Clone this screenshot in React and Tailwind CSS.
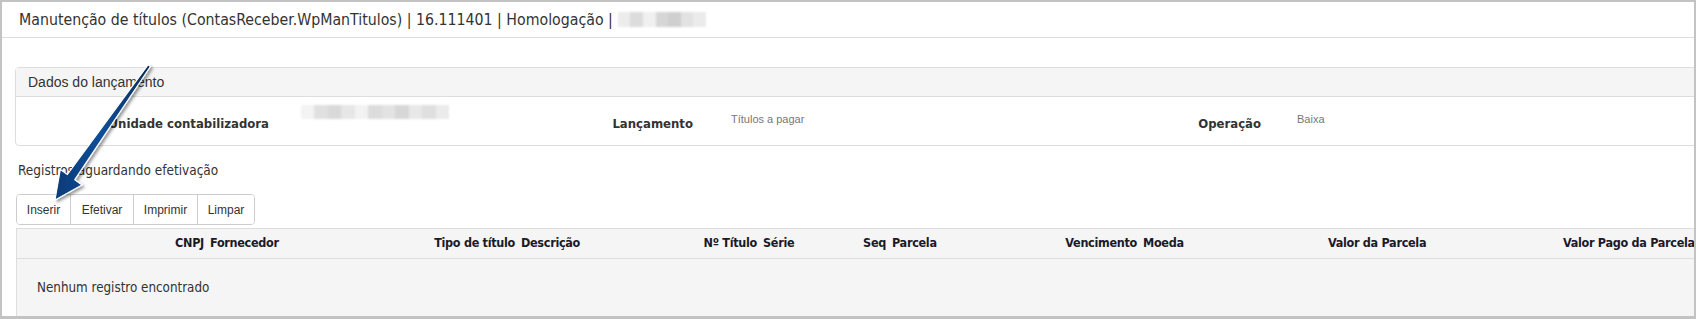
import React from 'react'

const tahoma = "font-['DejaVu_Sans_Condensed','DejaVu_Sans',sans-serif]"
const arial = "font-['Liberation_Sans',Arial,sans-serif]"

// colunas do grid: primeiro de cada par alinhado a direita, segundo a esquerda
const headers = [
  { label: 'CNPJ', w: 'w-[193px]', right: true },
  { label: 'Fornecedor', w: 'w-[190px]' },
  { label: 'Tipo de título', w: 'w-[121px]', right: true },
  { label: 'Descrição', w: 'w-[129px]' },
  { label: 'Nº Título', w: 'w-[113px]', right: true },
  { label: 'Série', w: 'w-[67px]' },
  { label: 'Seq', w: 'w-[62px]', right: true },
  { label: 'Parcela', w: 'w-[108px]' },
  { label: 'Vencimento', w: 'w-[143px]', right: true },
  { label: 'Moeda', w: 'w-[185px]' },
  { label: 'Valor da Parcela', w: 'w-[235px]' },
  { label: 'Valor Pago da Parcela', w: 'w-[200px]' },
]

const buttons = [
  { label: 'Inserir', w: 'w-[53px]' },
  { label: 'Efetivar', w: 'w-[63px]' },
  { label: 'Imprimir', w: 'w-[64px]' },
  { label: 'Limpar', w: 'w-[57px]' },
]

function Blur({ className, blocks }) {
  // valor mascarado no print
  return (
    <div className={`flex blur-[1px] ${className}`}>
      {blocks.map((c, i) => (
        <span key={i} className={`h-full flex-1 ${c}`} />
      ))}
    </div>
  )
}

function Arrow() {
  return (
    <svg className="absolute left-0 top-0 pointer-events-none" width="200" height="220" viewBox="0 0 200 220">
      <defs>
        <linearGradient id="arrowFill" x1="0" y1="0" x2="1" y2="0">
          <stop offset="0" stopColor="#0a3a78" />
          <stop offset="0.5" stopColor="#104f98" />
          <stop offset="1" stopColor="#062a58" />
        </linearGradient>
        <filter id="arrowShadow" x="-20%" y="-20%" width="140%" height="140%">
          <feDropShadow dx="2" dy="2" stdDeviation="1.5" floodColor="#000" floodOpacity="0.4" />
        </filter>
      </defs>
      <polygon
        points="146,62.8 65.4,172.5 58.3,167.4 53,198 80,182.9 72.8,177.7 148.4,64.5"
        fill="url(#arrowFill)"
        stroke="#ffffff"
        strokeWidth="1.2"
        strokeLinejoin="round"
        filter="url(#arrowShadow)"
      />
    </svg>
  )
}

export default function App() {
  return (
    <div className="relative w-[1696px] h-[319px] overflow-hidden bg-white border-2 border-b-[3px] border-[#c3c3c3]">
      {/* titulo */}
      <div className={`h-[36px] border-b border-[#dcdcdc] flex items-center pl-[17px] text-[15.75px] text-[#333] ${tahoma}`}>
        <span>Manutenção de títulos (ContasReceber.WpManTitulos) | 16.111401 | Homologação |</span>
        <Blur
          className="ml-[5px] h-[15px] w-[88px]"
          blocks={['bg-[#ececec]', 'bg-[#dcdcdc]', 'bg-[#f0f0f0]', 'bg-[#d6d6d6]', 'bg-[#cfcfcf]', 'bg-[#e2e2e2]', 'bg-[#ebebeb]']}
        />
      </div>

      {/* dados do lancamento */}
      <div className="mt-[29px] ml-[13px] w-[1720px] border border-[#dddddd] rounded-[4px]">
        <div className={`h-[29px] border-b border-[#dddddd] bg-[#f5f5f5] flex items-center pl-[12px] text-[14px] text-[#333] ${arial}`}>
          Dados do lançamento
        </div>
        <div className="h-[48px] flex items-start">
          <div className={`w-[253px] pt-[19px] text-right text-[13px] font-bold leading-[16px] text-[#333] ${tahoma}`}>
            Unidade contabilizadora
          </div>
          <Blur
            className="ml-[32px] mt-[8px] h-[14px] w-[148px]"
            blocks={['bg-[#f3f3f3]', 'bg-[#e0e0e0]', 'bg-[#d9d9d9]', 'bg-[#e6e6e6]', 'bg-[#f2f2f2]', 'bg-[#dcdcdc]', 'bg-[#e3e3e3]', 'bg-[#d7d7d7]', 'bg-[#e8e8e8]', 'bg-[#dfdfdf]', 'bg-[#ebebeb]']}
          />
          <div className={`ml-[151px] w-[93px] pt-[19px] text-right text-[13px] font-bold leading-[16px] text-[#333] ${tahoma}`}>
            Lançamento
          </div>
          <div className={`ml-[38px] w-[428px] pt-[15px] text-[11px] leading-[14px] text-[#777] ${arial}`}>
            Títulos a pagar
          </div>
          <div className={`w-[102px] pt-[19px] text-right text-[13px] font-bold leading-[16px] text-[#333] ${tahoma}`}>
            Operação
          </div>
          <div className={`ml-[36px] pt-[15px] text-[11px] leading-[14px] text-[#777] ${arial}`}>
            Baixa
          </div>
        </div>
      </div>

      {/* registros */}
      <div className={`mt-[16px] pl-[16px] text-[13.5px] leading-[16px] text-[#333] ${tahoma}`}>
        Registros aguardando efetivação
      </div>

      <div className={`mt-[16px] ml-[14px] inline-flex h-[31px] border border-[#cccccc] rounded-[4px] overflow-hidden ${arial}`}>
        {buttons.map((b, i) => (
          <div
            key={b.label}
            className={`${b.w} flex items-center justify-center text-[12px] text-[#333] bg-white ${i > 0 ? 'border-l border-[#cccccc]' : ''}`}
          >
            {b.label}
          </div>
        ))}
      </div>

      <div className="mt-[3px] ml-[14px] w-[1720px] border border-[#dddddd] bg-[#f5f5f5]">
        <div className={`h-[30px] border-b border-[#dddddd] flex items-center text-[12.5px] font-bold tracking-[-0.3px] text-[#1a1a28] whitespace-nowrap ${tahoma}`}>
          {headers.map((h) => (
            <div key={h.label} className={`${h.w} shrink-0 ${h.right ? 'text-right pr-[6px]' : ''}`}>
              {h.label}
            </div>
          ))}
        </div>
        <div className={`h-[60px] pt-[21px] pl-[20px] text-[13.3px] leading-[16px] text-[#333] ${tahoma}`}>
          Nenhum registro encontrado
        </div>
      </div>

      <Arrow />
    </div>
  )
}
